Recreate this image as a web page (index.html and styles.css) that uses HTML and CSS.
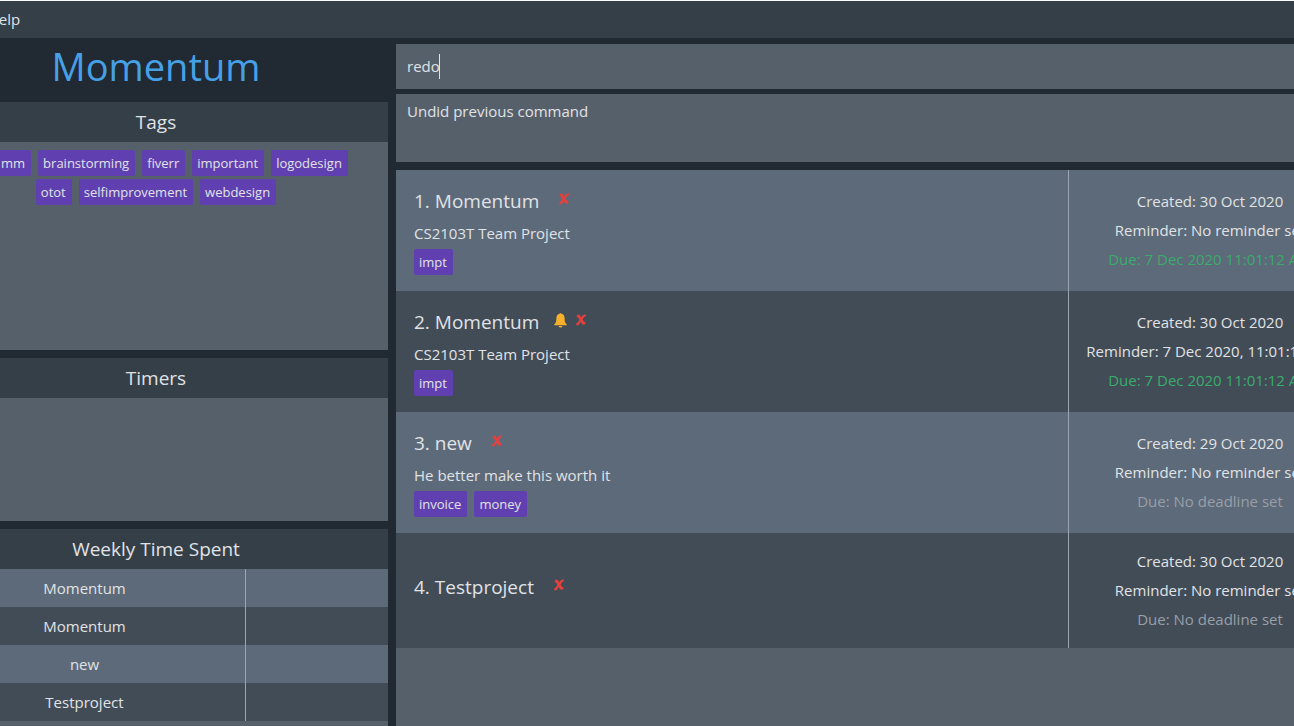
FILE: index.html
```html
<!DOCTYPE html>
<html lang="en">
<head>
<meta charset="utf-8">
<title>Momentum</title>
<link rel="stylesheet" href="styles.css">
</head>
<body>
<svg class="symbols" aria-hidden="true">
  <symbol id="cross" viewBox="0 0 10 12">
    <path d="M1.4 0.7C3.6 0 4.4 2 5.2 3.5C6.2 1.4 7.8 0.2 10 0.5V2C8.5 2.4 7.4 4 6.6 5.6C7.5 7.3 8.1 8.3 9.6 8.4C9.4 11 7 11.4 5.9 9.8C5.4 9 5 8.4 4.7 7.8C3.8 9.8 2.8 11.5 1.1 11.5C-0.3 11.4-0.1 9.3 0.9 9C2 8.3 2.7 7.1 3.4 5.7C2.7 4.3 2 3.2 0.5 3Z"/>
  </symbol>
  <symbol id="bell" viewBox="0 0 13 15">
    <path d="M5.7 0.3H7.3V0.8C9.6 1.2 10.6 3 10.6 5.3C10.6 8.7 11.2 10.3 12.8 11.4V12.2H0.2V11.4C1.8 10.3 2.4 8.7 2.4 5.3C2.4 3 3.4 1.2 5.7 0.8ZM4.6 13H8.4C8 15.1 5 15.1 4.6 13Z"/>
  </symbol>
</svg>
<div class="app">
  <nav class="menu-bar"><button class="menu" type="button">File</button><button class="menu" type="button">Help</button></nav>
  <div class="content">
    <aside class="sidebar">
      <h1 class="logo">Momentum</h1>
      <section class="panel">
        <h2 class="panel-title">Tags</h2>
        <div class="panel-body tags-body">
          <div class="tags tags-centered">
            <span class="tag tag-wide">mm</span><span class="tag">brainstorming</span><span class="tag">fiverr</span><span class="tag">important</span><span class="tag">logodesign</span>
            <span class="tag">otot</span><span class="tag">selfimprovement</span><span class="tag">webdesign</span>
          </div>
        </div>
      </section>
      <section class="panel">
        <h2 class="panel-title">Timers</h2>
        <div class="panel-body timers-body"></div>
      </section>
      <section class="panel panel-last">
        <h2 class="panel-title">Weekly Time Spent</h2>
        <div class="panel-body">
          <table class="times">
            <tr><td class="times-name">Momentum</td><td></td></tr>
            <tr><td class="times-name">Momentum</td><td></td></tr>
            <tr><td class="times-name">new</td><td></td></tr>
            <tr><td class="times-name">Testproject</td><td></td></tr>
          </table>
        </div>
      </section>
    </aside>
    <main class="main">
      <div class="command"><input class="command-input" type="text" value="redo" aria-label="Command"><span class="caret"></span></div>
      <div class="result">Undid previous command</div>
      <ol class="projects">
        <li class="project">
          <div class="summary">
            <div class="title-row"><h3 class="title">1. Momentum</h3><span class="status"><svg class="cross"><use href="#cross"/></svg></span></div>
            <p class="description">CS2103T Team Project</p>
            <div class="tags"><span class="tag">impt</span></div>
          </div>
          <div class="dates"><p>Created: 30 Oct 2020</p><p>Reminder: No reminder set</p><p class="due">Due: 7 Dec 2020 11:01:12 AM</p></div>
        </li>
        <li class="project">
          <div class="summary">
            <div class="title-row"><h3 class="title">2. Momentum</h3><span class="status status-reminder"><svg class="bell"><use href="#bell"/></svg><svg class="cross"><use href="#cross"/></svg></span></div>
            <p class="description">CS2103T Team Project</p>
            <div class="tags"><span class="tag">impt</span></div>
          </div>
          <div class="dates"><p>Created: 30 Oct 2020</p><p>Reminder: 7 Dec 2020, 11:01:12 AM</p><p class="due">Due: 7 Dec 2020 11:01:12 AM</p></div>
        </li>
        <li class="project">
          <div class="summary">
            <div class="title-row"><h3 class="title">3. new</h3><span class="status"><svg class="cross"><use href="#cross"/></svg></span></div>
            <p class="description">He better make this worth it</p>
            <div class="tags"><span class="tag">invoice</span><span class="tag">money</span></div>
          </div>
          <div class="dates"><p>Created: 29 Oct 2020</p><p>Reminder: No reminder set</p><p class="no-due">Due: No deadline set</p></div>
        </li>
        <li class="project">
          <div class="summary">
            <div class="title-row"><h3 class="title">4. Testproject</h3><span class="status"><svg class="cross"><use href="#cross"/></svg></span></div>
            <div class="tags tags-empty"></div>
          </div>
          <div class="dates"><p>Created: 30 Oct 2020</p><p>Reminder: No reminder set</p><p class="no-due">Due: No deadline set</p></div>
        </li>
      </ol>
    </main>
  </div>
</div>
</body>
</html>
```
FILE: styles.css
```css
* { box-sizing: border-box; }
html, body { height: 100%; }
body {
  margin: 0;
  overflow: hidden;
  background: #212932;
  color: #e0e3e6;
  font: 15px/24px "Open Sans", "Noto Sans", sans-serif;
}
h1, h2, h3, p, ol { margin: 0; padding: 0; font-weight: 400; }
.symbols { display: none; }

.app {
  display: flex;
  flex-direction: column;
  min-height: 100vh;
  margin: 0 -57px 0 -76px;
  border-top: 1px solid #fff;
}
.menu-bar { display: flex; gap: 8px; height: 37px; padding: 0 8px; background: #353f48; }
.menu { padding: 0 8px 2px; border: 0; background: none; color: inherit; font: inherit; }
.content { flex: 1; display: flex; gap: 8px; }

.sidebar { flex: 0 0 464px; display: flex; flex-direction: column; gap: 8px; }
.logo {
  height: 56px;
  color: #46a0e6;
  font-size: 38px;
  line-height: 56px;
  text-align: center;
}
.panel-title { height: 40px; background: #353f48; font-size: 19px; line-height: 40px; text-align: center; }
.panel-body { background: #56606b; }
.tags-body { min-height: 208px; padding: 8px 36px; }
.timers-body { min-height: 123px; }
.panel-last { flex: 1; display: flex; flex-direction: column; }
.panel-last .panel-body { flex: 1; }

.times { width: 100%; border-spacing: 0; table-layout: fixed; }
.times tr { height: 38px; background: #424c57; }
.times tr:nth-child(odd) { background: #5d6a79; }
.times td { padding: 0; text-align: center; }
.times .times-name { width: 322px; border-right: 1px solid #9ca6b3; }

.tags { display: flex; flex-wrap: wrap; gap: 3px 7px; }
.tags-centered { justify-content: center; }
.tags-empty { height: 8px; }
.tag { padding: 0 6px 0 5px; border-radius: 2px; background: #6040b0; font-size: 13px; line-height: 26px; }
.tag-wide { min-width: 67px; text-align: right; }

.main { flex: 1; display: flex; flex-direction: column; padding-top: 6px; }
.command { position: relative; height: 45px; background: #56606b; }
.command-input { width: 100%; height: 100%; padding: 0 11px 2px; border: 0; outline: 0; background: none; color: inherit; font: inherit; }
.caret { position: absolute; top: 10px; left: 43px; width: 1px; height: 25px; background: #e0e3e6; }
.result { height: 68px; margin: 5px 0 8px; padding: 5px 11px; background: #56606b; }

.projects { flex: 1; background: #56606b; list-style: none; }
.project { display: flex; background: #424c57; }
.project:nth-child(odd) { background: #5d6a79; }
.summary { flex: 1; display: flex; flex-direction: column; justify-content: center; padding: 16px 18px; }
.title-row { display: flex; }
.title { font-size: 19px; line-height: 30px; }
.status { display: flex; align-items: center; gap: 9px; height: 26px; padding-left: 20px; }
.status-reminder { padding-left: 15px; }
.bell { width: 13px; height: 15px; fill: #f6b02c; }
.cross { width: 10px; height: 12px; fill: #e5403c; }
.description { padding-top: 2px; line-height: 30px; margin-bottom: 1px; }
.dates {
  flex: 0 0 283px;
  display: flex;
  flex-direction: column;
  justify-content: center;
  gap: 5px;
  min-height: 115px;
  padding-bottom: 2px;
  border-left: 1px solid #9ca6b3;
  text-align: center;
}
.due { color: #3bab6c; }
.no-due { color: #989fa7; }
```
